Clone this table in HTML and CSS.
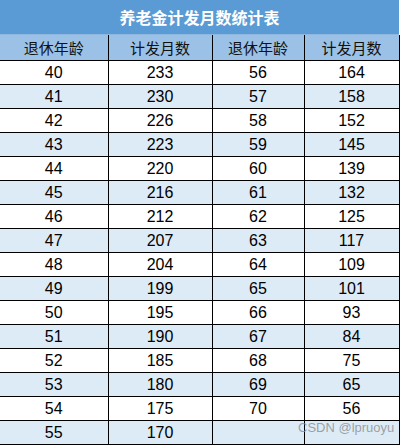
FILE: index.html
```html
<!DOCTYPE html>
<html lang="zh">
<head>
<meta charset="utf-8">
<link rel="stylesheet" href="styles.css">
</head>
<body>
<div class="sheet">
  <div class="title">养老金计发月数统计表</div>
  <table class="grid">
    <colgroup><col class="c1"><col class="c2"><col class="c3"><col class="c4"></colgroup>
    <thead>
      <tr><th>退休年龄</th><th>计发月数</th><th>退休年龄</th><th>计发月数</th></tr>
    </thead>
    <tbody>
      <tr><td>40</td><td>233</td><td>56</td><td>164</td></tr>
      <tr><td>41</td><td>230</td><td>57</td><td>158</td></tr>
      <tr><td>42</td><td>226</td><td>58</td><td>152</td></tr>
      <tr><td>43</td><td>223</td><td>59</td><td>145</td></tr>
      <tr><td>44</td><td>220</td><td>60</td><td>139</td></tr>
      <tr><td>45</td><td>216</td><td>61</td><td>132</td></tr>
      <tr><td>46</td><td>212</td><td>62</td><td>125</td></tr>
      <tr><td>47</td><td>207</td><td>63</td><td>117</td></tr>
      <tr><td>48</td><td>204</td><td>64</td><td>109</td></tr>
      <tr><td>49</td><td>199</td><td>65</td><td>101</td></tr>
      <tr><td>50</td><td>195</td><td>66</td><td>93</td></tr>
      <tr><td>51</td><td>190</td><td>67</td><td>84</td></tr>
      <tr><td>52</td><td>185</td><td>68</td><td>75</td></tr>
      <tr><td>53</td><td>180</td><td>69</td><td>65</td></tr>
      <tr><td>54</td><td>175</td><td>70</td><td>56</td></tr>
      <tr><td>55</td><td>170</td><td></td><td></td></tr>
    </tbody>
  </table>
  <div class="watermark">CSDN @lpruoyu</div>
</div>
</body>
</html>
```
FILE: styles.css
```css
html, body {
  margin: 0;
  padding: 0;
  background: #ffffff;
}
.sheet {
  position: relative;
  width: 399px;
  margin-left: 0;
  font-family: "Liberation Sans", "Noto Sans CJK SC", sans-serif;
}
.title {
  height: 34px;
  line-height: 34px;
  background: #5b9bd5;
  color: #ffffff;
  font-family: "Noto Sans CJK SC", sans-serif;
  font-weight: bold;
  font-size: 16px;
  text-align: center;
  border-bottom: 1px solid #8fb8e0;
}
.grid {
  width: 399px;
  border-collapse: collapse;
  table-layout: fixed;
}
.c1 { width: 108px; }
.c2 { width: 104px; }
.c3 { width: 92px; }
.c4 { width: 95px; }
.grid th {
  height: 25px;
  padding: 0;
  background: #9bc2e6;
  font-family: "Noto Sans CJK SC", sans-serif;
  font-weight: normal;
  font-size: 15px;
  color: #111;
  border-left: 1px solid #000;
  border-bottom: 1px solid #000;
}
.grid td {
  height: 23px;
  padding: 0;
  text-align: center;
  font-size: 16px;
  color: #000;
  border-left: 1px solid #000;
  border-bottom: 1px solid #000;
}
.grid th:first-child, .grid td:first-child {
  border-left: none;
}
.grid th:last-child, .grid td:last-child {
  border-right: 1px solid #000;
}
.grid tbody tr:nth-child(even) td {
  background: #ddebf7;
}
.watermark {
  position: absolute;
  left: 298px;
  top: 420px;
  font-family: "Liberation Sans", sans-serif;
  font-size: 13px;
  color: rgba(140, 140, 140, 0.8);
}
```
